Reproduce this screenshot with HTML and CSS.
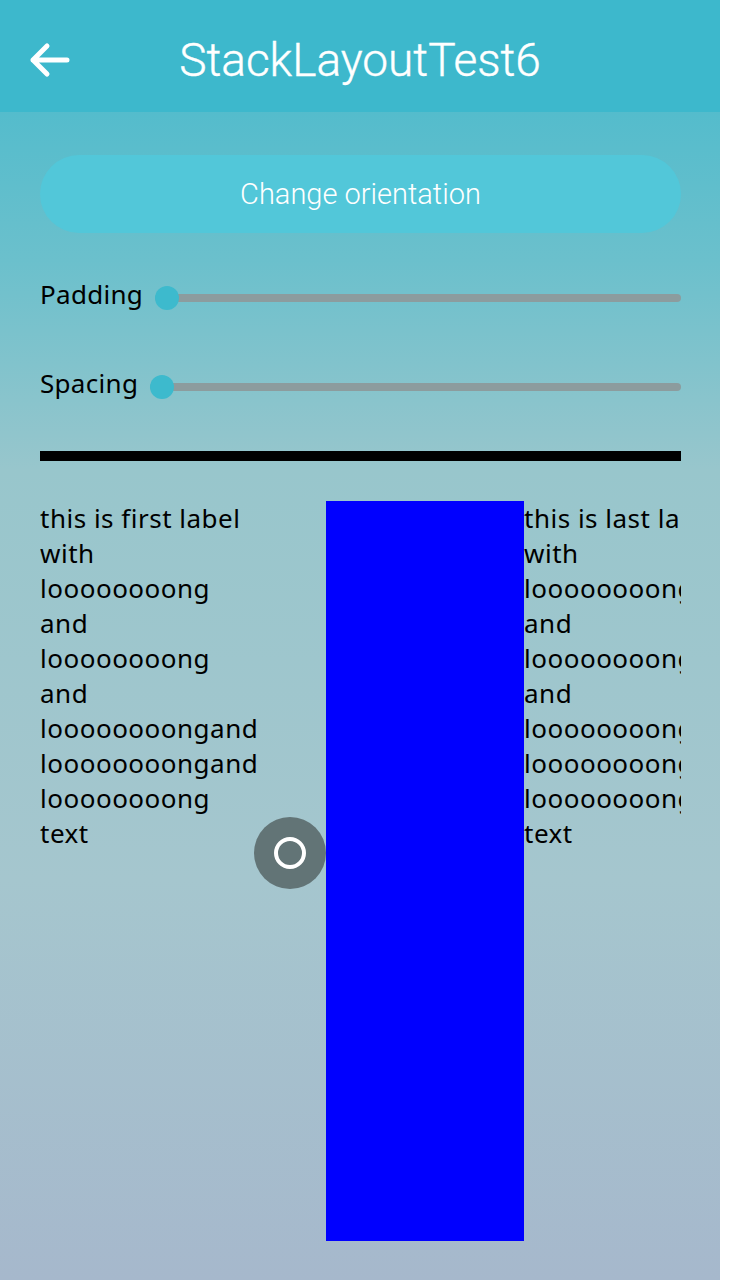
FILE: index.html
```html
<!DOCTYPE html>
<html>
<head>
<meta charset="utf-8">
<link rel="stylesheet" href="styles.css">
</head>
<body>
<div class="app">
  <header class="header">
    <svg class="back" width="50" height="40" viewBox="0 0 50 40">
      <path d="M5 20 H39 M19 6 L5 20 L19 34" fill="none" stroke="#fff" stroke-width="5" stroke-linecap="round" stroke-linejoin="round"/>
    </svg>
    <h1 class="title">StackLayoutTest6</h1>
  </header>
  <main class="content">
    <button class="btn">Change orientation</button>
    <div class="row row-padding">
      <span class="row-label">Padding</span>
      <div class="slider"><span class="thumb"></span></div>
    </div>
    <div class="row row-spacing">
      <span class="row-label">Spacing</span>
      <div class="slider"><span class="thumb"></span></div>
    </div>
    <div class="rule"></div>
    <div class="stack">
      <p class="lbl lbl-first">this is first label with loooooooong and loooooooong and loooooooongand loooooooongand loooooooong text</p>
      <div class="box"></div>
      <p class="lbl lbl-last">this is last label with loooooooong and loooooooong and loooooooong loooooooong loooooooong text</p>
      <div class="fab"><span class="ring"></span></div>
    </div>
  </main>
</div>
</body>
</html>
```
FILE: styles.css
```css
html, body {
  margin: 0;
  padding: 0;
  background: #ffffff;
}
.app {
  width: 720px;
  height: 1280px;
  overflow: hidden;
  background: linear-gradient(180deg, #43b9cc 0px, #6bc0cc 260px, #98c6cc 470px, #a5c6ce 880px, #a6b8cc 1280px);
  font-family: "Noto Sans", "Open Sans", sans-serif;
  color: #000;
}
.header {
  height: 112px;
  background: #3db8cc;
  display: flex;
  align-items: center;
  justify-content: center;
  position: relative;
}
.back {
  position: absolute;
  left: 28px;
  top: 40px;
}
.title {
  margin: 0;
  color: #fff;
  font-family: Roboto, "Noto Sans", sans-serif;
  font-weight: 300;
  font-size: 46px;
  line-height: 1;
  margin-top: 8px;
  -webkit-text-stroke: 0.4px #fff;
}
.content {
  padding: 43px 39px 0 40px;
  position: relative;
}
.btn {
  display: block;
  width: 641px;
  height: 78px;
  border: none;
  border-radius: 39px;
  background: #52c7d9;
  color: #fff;
  font-family: Roboto, "Noto Sans", sans-serif;
  font-weight: 300;
  font-size: 29px;
  padding: 0;
  margin: 0;
}
.row {
  display: flex;
  align-items: center;
  gap: 12px;
  height: 40px;
}
.row-padding { margin-top: 45px; }
.row-spacing { margin-top: 49px; }
.row-label {
  font-size: 26px;
  letter-spacing: 0.3px;
  line-height: 40px;
  margin-top: -8px;
}
.slider {
  flex: 1;
  height: 8px;
  border-radius: 4px;
  background: #8c9c9e;
  position: relative;
}
.thumb {
  position: absolute;
  left: 0;
  top: -8px;
  width: 24px;
  height: 24px;
  border-radius: 50%;
  background: #3dbacd;
}
.rule {
  margin-top: 44px;
  height: 10px;
  background: #000;
}
.stack {
  margin-top: 40px;
  height: 740px;
  display: flex;
  align-items: flex-start;
  overflow: hidden;
  position: relative;
}
.lbl {
  margin: 0;
  font-size: 26px;
  letter-spacing: 0.5px;
  line-height: 35px;
  flex-shrink: 0;
}
.lbl-first {
  width: 222px;
  margin-right: 64px;
}
.box {
  width: 198px;
  height: 740px;
  background: #0000ff;
  flex-shrink: 0;
}
.lbl-last {
  width: 222px;
}
.fab {
  position: absolute;
  left: 214px;
  top: 316px;
  width: 72px;
  height: 72px;
  border-radius: 50%;
  background: #627476;
  display: flex;
  align-items: center;
  justify-content: center;
}
.ring {
  width: 24px;
  height: 24px;
  border: 4px solid #fff;
  border-radius: 50%;
}
```
